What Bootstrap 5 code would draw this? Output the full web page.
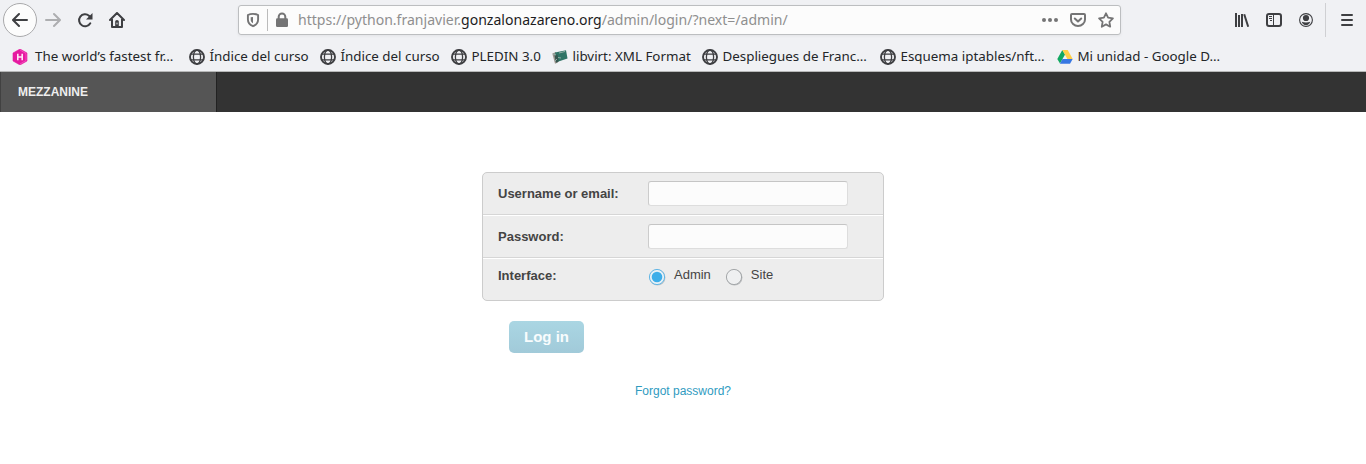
<!DOCTYPE html>
<html lang="en">
<head>
<meta charset="utf-8">
<title>Log in | Mezzanine</title>
<link href="https://cdn.jsdelivr.net/npm/bootstrap@5.3.0/dist/css/bootstrap.min.css" rel="stylesheet">
<style>
body{font-family:"Liberation Sans",Arial,sans-serif;font-size:13px;color:#444;background:#fff;overflow:hidden}
svg{display:block;flex:none}
.chrome{font-family:"Noto Sans",sans-serif;background:#f0f1f4;height:72px;border-bottom:1px solid #b7b8b8;color:#3e3f42}
.toolbar{height:40px;padding-left:3px}
.back{width:34px;height:34px;border:1px solid #a9a9ab;border-radius:50%;background:#fcfcfc}
.fwd{margin-left:8px;color:#adaeb0}
.reload,.home{margin-left:16px}
.address{width:883px;height:30px;margin-left:113px;border:1px solid #bcbec0;border-radius:3px;background:#fcfcfc;box-shadow:0 1px 3px rgba(0,0,0,.06);color:#747475;padding:0 6px}
.address .rule{width:1px;height:22px;background:#bbb;margin:0 6px}
.pocket{margin:0 12px}
.url{font-size:14.05px;color:#8f8f8f;margin-left:8px;white-space:nowrap;line-height:28px}
.url b{font-weight:400;color:#1c1c1e}
.tools{width:132px}
.tools .rule{width:1px;height:34px;background:#cfd0d3;margin:0 13px 0 11px}
.marks{height:31px;padding:2px 0 0 12px;font-size:13.37px;color:#232629;white-space:nowrap}
.mark-item svg{margin-right:4.5px}
.mark-item .hugo{margin-right:7px}
.w-177{width:177px}.w-131{width:131px}.w-101{width:101px}.w-150{width:150px}.w-178{width:178px}
.site-bar{height:40px;background:#333}
.brand{width:217px;border-left:1px solid #414141;border-right:1px solid #222;background:#555;color:#eee;font-size:12px;font-weight:700;padding-left:17px}
.login{width:402px;margin-top:60px}
.fields{border:1px solid #ccc;border-radius:5px;background:#ededed;overflow:hidden}
.field-line{height:43px;padding-left:15px;border-top:1px solid #fff;border-bottom:1px solid #d6d6d6}
.field-line:first-child{height:42px;border-top:0}
.field-line:last-child{height:42px;border-bottom:0;}
.field-line .name{width:150px;font-weight:700}
.field-line .entry{width:200px;height:25px;min-height:0;border:1px solid #ddd;border-top-color:#c5c5c5;border-left-color:#ccc;border-radius:3px;background:#fcfcfc;padding:2px 5px}
.choice{height:34px}
.dot{margin-top:2px}
.dot-site{margin-left:14px}
.option{padding:0 0 2px 8px}
.submit{width:75px;height:32px;margin:20px 0 0 27px;padding:0;border:0;border-radius:5px;font-size:15px;font-weight:700;color:#f8fcfd;background:linear-gradient(#aad6e3,#a1cad9)}
.forgot{margin-top:30px;font-size:12px;line-height:16px}
.forgot a{color:#309bbf;text-decoration:none}
</style>
</head>
<body>
<svg width="0" height="0" class="position-absolute" aria-hidden="true">
<symbol id="globe" viewBox="0 0 16 16"><g fill="none" stroke="#3e3f42"><circle cx="8" cy="8" r="7" stroke-width="1.9"/><ellipse cx="8" cy="8" rx="3.6" ry="7" stroke-width="1.3"/><path d="M2 5.2h12M2 10.8h12" stroke-width="1.3"/></g></symbol>
</svg>
<header class="chrome">
<div class="toolbar d-flex align-items-center">
<div class="back d-flex align-items-center justify-content-center"><svg width="16" height="16" fill="none" stroke="currentColor" stroke-width="2" stroke-linecap="round" stroke-linejoin="round"><path d="M15 8H1.500M7 2L1 8l6 6"/></svg></div>
<svg class="fwd" width="16" height="16" fill="none" stroke="currentColor" stroke-width="2" stroke-linecap="round" stroke-linejoin="round"><path d="M1 8h13.500M9 2l6 6-6 6"/></svg>
<svg class="reload" width="16" height="16" fill="none" stroke="currentColor" stroke-width="2"><path d="M13.300 11.300A6 6 0 1 1 12 3.700L13.500 5.300" stroke-linecap="round"/><path d="M15.500 1v6.500H9z" fill="currentColor" stroke="none"/></svg>
<svg class="home" width="16" height="16" fill="none" stroke="currentColor" stroke-width="2" stroke-linejoin="round" stroke-linecap="round"><path d="M1 8L8 1l7 7M3 7v8h10V7"/><path d="M6.200 15V9.500Q6.200 8 8 8t1.800 1.500V15z" fill="currentColor" stroke="none"/><path d="M8 11v1" stroke="#f0f1f4" stroke-width="1"/></svg>
<div class="address d-flex align-items-center">
<svg width="16" height="16" fill="none" stroke="currentColor"><path d="M8 1.900C6 1.900 4.500 2.200 2.900 3v4.500C2.900 11 4.800 12.900 8 14.200c3.200-1.300 5.100-3.200 5.100-6.700V3C11.500 2.200 10 1.900 8 1.900z" stroke-width="1.900" stroke-linejoin="round"/><path d="M8 5v6.300C6.400 10.400 5.700 9.400 5.700 7.500V5.300z" fill="currentColor" stroke="none"/></svg>
<span class="rule"></span>
<svg width="16" height="16"><path d="M4.700 7V4.700a3.300 3.300 0 0 1 6.600 0V7" fill="none" stroke="currentColor" stroke-width="2"/><rect x="2" y="6.300" width="12" height="8.700" rx="1.300" fill="currentColor"/></svg>
<span class="url">https://python.franjavier.<b>gonzalonazareno.org</b>/admin/login/?next=/admin/</span>
<svg class="ms-auto" width="16" height="16" fill="currentColor"><circle cx="2" cy="8" r="2"/><circle cx="8" cy="8" r="2"/><circle cx="14" cy="8" r="2"/></svg>
<svg class="pocket" width="16" height="16" fill="none" stroke="currentColor" stroke-width="2" stroke-linejoin="round" stroke-linecap="round"><path d="M2 2h12q1 0 1 1v4.500a7 6.500 0 0 1-14 0V3q0-1 1-1z"/><path d="M4.800 6.500L8 9.500l3.200-3"/></svg>
<svg width="16" height="16" fill="none" stroke="currentColor" stroke-width="1.800" stroke-linejoin="round"><path d="M8 1.300l2.100 4.400 4.800.7-3.500 3.400.8 4.900L8 12.400l-4.200 2.300.8-4.900L1.100 6.400l4.800-.7z"/></svg>
</div>
<div class="tools d-flex align-items-center ms-auto">
<svg width="16" height="16" stroke="currentColor" stroke-width="2" fill="none"><path d="M2 1v14M5 3v12M8 2v13M10.200 2.200L14.200 14.800"/></svg>
<svg class="ms-3" width="16" height="16" fill="none" stroke="currentColor"><rect x="1" y="2" width="14" height="12" rx="2" stroke-width="2"/><path d="M7.500 2v12M3 4.500h3M3 6.500h3M4 8.500h2" stroke-width="1"/></svg>
<svg class="ms-3" width="16" height="16"><circle cx="8" cy="8" r="6.400" fill="none" stroke="currentColor" stroke-width="1.100"/><circle cx="8" cy="6" r="3.100" fill="currentColor"/><path d="M3.700 9.700Q8 11.300 12.300 9.700C11.500 12.200 10 13 8 13s-3.500-.8-4.300-3.300z" fill="currentColor"/></svg>
<span class="rule"></span>
<svg width="16" height="16" stroke="currentColor" stroke-width="2" stroke-linecap="round"><path d="M3 3h10M3 8h10M3 13h10"/></svg>
</div>
</div>
<nav class="marks d-flex align-items-center">
<div class="mark-item w-177 d-flex align-items-center"><svg class="hugo" width="16" height="16"><path d="M8 0l7 4v8l-7 4-7-4V4z" fill="#e61aa0" stroke="#e61aa0" stroke-width=".6" stroke-linejoin="round"/><path d="M8 1l6 3.500v7L8 15" fill="none" stroke="#f44abc" stroke-width="1"/><path d="M5.800 4.800v6.400M10.200 4.800v6.400M5.800 8h4.400" stroke="#ffe6f6" stroke-width="1.600" fill="none"/></svg>The world’s fastest fr…</div>
<div class="mark-item w-131 d-flex align-items-center"><svg width="16" height="16"><use href="#globe"/></svg>Índice del curso</div>
<div class="mark-item w-131 d-flex align-items-center"><svg width="16" height="16"><use href="#globe"/></svg>Índice del curso</div>
<div class="mark-item w-101 d-flex align-items-center"><svg width="16" height="16"><use href="#globe"/></svg>PLEDIN 3.0</div>
<div class="mark-item w-150 d-flex align-items-center"><svg width="16" height="16"><path d="M.3 4.500L4 3l2 10.500-3 1.200z" fill="#98938d"/><path d="M3 3.500L14 1.200l1.500 8.300L5 13z" fill="#2f7466"/><path d="M2.500 6.500l3-1 1.200 7-2.700 1.300z" fill="#35564f"/><path d="M7 4l6-1.500M6 8.500l3 .5M1 5l3 1M3 12l2-2" stroke="#8fada5" fill="none"/></svg>libvirt: XML Format</div>
<div class="mark-item w-178 d-flex align-items-center"><svg width="16" height="16"><use href="#globe"/></svg>Despliegues de Franc…</div>
<div class="mark-item w-177 d-flex align-items-center"><svg width="16" height="16"><use href="#globe"/></svg>Esquema iptables/nft…</div>
<div class="mark-item d-flex align-items-center"><svg width="16" height="16"><path d="M5.300 1L8 5.500 3 14.500.3 10z" fill="#11a861"/><path d="M5.300 1h5.400l5 9h-5.300z" fill="#ffcf48"/><path d="M5.500 10h10.200L13 14.700H2.900z" fill="#3777e3"/></svg>Mi unidad - Google D…</div>
</nav>
</header>
<div class="site-bar d-flex"><div class="brand d-flex align-items-center">MEZZANINE</div></div>
<main class="login mx-auto">
<form>
<div class="fields">
<div class="field-line d-flex align-items-center"><label class="name" for="user">Username or email:</label><input id="user" class="form-control entry" type="text"></div>
<div class="field-line d-flex align-items-center"><label class="name" for="pass">Password:</label><input id="pass" class="form-control entry" type="password"></div>
<div class="field-line d-flex"><div class="choice d-flex align-items-center"><span class="name">Interface:</span>
<svg width="18" height="18" class="dot"><circle cx="9.500" cy="9.500" r="8" fill="#c2c6c9"/><circle cx="9" cy="9" r="7.600" fill="#e8f1f6" stroke="#63b7e6"/><circle cx="9" cy="9" r="5.300" fill="#3daee9"/></svg><span class="option">Admin</span>
<svg width="18" height="18" class="dot dot-site"><circle cx="9.500" cy="9.500" r="8" fill="#bcbec0"/><circle cx="9" cy="9" r="7.600" fill="#eff0f1" stroke="#a5a8aa"/></svg><span class="option">Site</span></div></div>
</div>
<button class="btn submit d-block" type="button">Log in</button>
<div class="forgot text-center"><a href="#">Forgot password?</a></div>
</form>
</main>
<script src="https://cdn.jsdelivr.net/npm/bootstrap@5.3.0/dist/js/bootstrap.bundle.min.js"></script>
</body>
</html>
